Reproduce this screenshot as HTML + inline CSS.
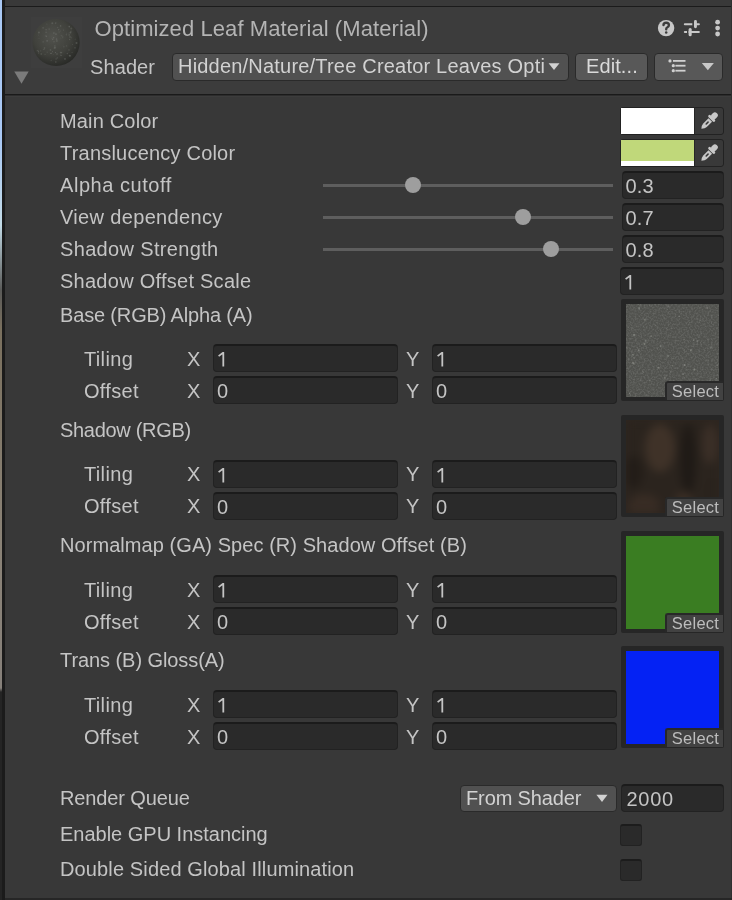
<!DOCTYPE html>
<html><head><meta charset="utf-8">
<style>
*{box-sizing:border-box;margin:0;padding:0}
html,body{width:732px;height:900px;overflow:hidden;background:#383838}
body{position:relative;will-change:transform;font-family:"Liberation Sans",sans-serif;color:#c4c4c4}
.a{position:absolute}
.t{position:absolute;font-size:20px;line-height:20px;letter-spacing:0.1px;white-space:nowrap;color:#c4c4c4}
.fld{position:absolute;background:#2a2a2a;border:1px solid #222;border-top:2px solid #1b1b1b;border-radius:4px}
.fld span{position:absolute;left:5px;top:3px;font-size:20px;line-height:20px;letter-spacing:0.1px;color:#c4c4c4}
.track{position:absolute;height:3px;background:#5e5e5e;left:323px;width:290px}
.thumb{position:absolute;width:16px;height:16px;border-radius:50%;background:#9e9e9e}
.tex{position:absolute;left:621px;width:103px;height:102px;background:#262626;border-radius:2px}
.tex .img{position:absolute;left:5px;top:5px;width:93px;height:93px;overflow:hidden}
.sel{position:absolute;left:44px;top:82px;width:58px;height:19px;background:#424242;border-top:2px solid #282828;border-left:2px solid #282828;border-radius:3px 0 0 0;font-size:16.5px;line-height:17px;color:#bdbdbd;text-align:center;letter-spacing:0.25px;padding-left:1px}
.stone{background:#5a5b57}.bark{background:#2e2620}.green{background:#3a7d22}.blue{background:#0422f4}
.btn{position:absolute;background:#585858;border:1px solid #2a2a2a;border-radius:4px}
.chk{position:absolute;left:620px;width:22px;height:22px;background:#2a2a2a;border:1px solid #222;border-top:2px solid #1c1c1c;border-radius:3px}
</style></head><body>
<!-- left desktop strip -->
<div class="a" style="left:0;top:0;width:2px;height:900px;background:linear-gradient(180deg,#a9c8f4 0,#a9c8f4 140px,#c2dae6 225px,#5a5a58 290px,#7a705e 330px,#8a8276 540px,#86807a 688px,#242424 692px,#242424 900px)"></div>
<div class="a" style="left:2px;top:0;width:3px;height:900px;background:#1b1b1b"></div>
<!-- top -->
<div class="a" style="left:5px;top:0;width:727px;height:6px;background:#393939"></div>
<div class="a" style="left:5px;top:6px;width:727px;height:1px;background:#1b1b1b"></div>
<div class="a" style="left:5px;top:7px;width:727px;height:87px;background:#3c3c3c"></div>
<div class="a" style="left:5px;top:94px;width:727px;height:1px;background:#1a1a1a"></div>
<div class="a" style="left:5px;top:95px;width:727px;height:1px;background:#2c2c2c"></div>
<div class="a" style="left:5px;top:96px;width:727px;height:1px;background:#3c3c3c"></div>
<div class="a" style="left:731px;top:0;width:1px;height:900px;background:#303030"></div>
<div class="a" style="left:5px;top:898px;width:727px;height:2px;background:#262626"></div>

<!-- header -->
<div class="a" style="left:31px;top:17px;width:51px;height:51px;background:#3e3e3e"></div>
<svg class="a" style="left:30px;top:16px" width="52" height="53" viewBox="30 16 52 53">
<defs><radialGradient id="sg" cx="0.42" cy="0.38" r="0.65"><stop offset="0" stop-color="#51524d"/><stop offset="0.6" stop-color="#40413c"/><stop offset="1" stop-color="#282926"/></radialGradient></defs>
<circle cx="56.1" cy="42.5" r="23.6" fill="url(#sg)"/>
<circle cx="57.3" cy="57.9" r="0.8" fill="#b8bcb8" opacity="0.13"/><circle cx="52.3" cy="38.7" r="0.9" fill="#b8bcb8" opacity="0.07"/><circle cx="55.5" cy="52.6" r="0.7" fill="#b8bcb8" opacity="0.23"/><circle cx="63.6" cy="30.1" r="0.6" fill="#b8bcb8" opacity="0.17"/><circle cx="43.1" cy="27.8" r="0.9" fill="#b8bcb8" opacity="0.15"/><circle cx="53.6" cy="37.8" r="0.8" fill="#b8bcb8" opacity="0.19"/><circle cx="54.9" cy="46.0" r="0.7" fill="#b8bcb8" opacity="0.20"/><circle cx="52.3" cy="23.2" r="1.0" fill="#b8bcb8" opacity="0.18"/><circle cx="41.3" cy="54.0" r="1.0" fill="#b8bcb8" opacity="0.14"/><circle cx="60.8" cy="38.0" r="0.6" fill="#b8bcb8" opacity="0.09"/><circle cx="69.6" cy="39.5" r="0.7" fill="#b8bcb8" opacity="0.17"/><circle cx="43.1" cy="41.9" r="0.8" fill="#b8bcb8" opacity="0.12"/><circle cx="38.9" cy="32.4" r="1.0" fill="#b8bcb8" opacity="0.18"/><circle cx="69.1" cy="26.1" r="0.6" fill="#b8bcb8" opacity="0.17"/><circle cx="69.3" cy="26.7" r="0.8" fill="#b8bcb8" opacity="0.21"/><circle cx="53.9" cy="33.1" r="0.8" fill="#b8bcb8" opacity="0.20"/><circle cx="54.9" cy="47.7" r="1.0" fill="#b8bcb8" opacity="0.20"/><circle cx="72.1" cy="52.4" r="0.6" fill="#b8bcb8" opacity="0.13"/><circle cx="51.1" cy="60.2" r="0.5" fill="#b8bcb8" opacity="0.21"/><circle cx="52.8" cy="39.6" r="0.7" fill="#b8bcb8" opacity="0.18"/><circle cx="71.3" cy="28.4" r="1.0" fill="#b8bcb8" opacity="0.15"/><circle cx="54.0" cy="47.9" r="0.5" fill="#b8bcb8" opacity="0.16"/><circle cx="60.5" cy="55.2" r="0.6" fill="#b8bcb8" opacity="0.16"/><circle cx="75.0" cy="47.7" r="1.0" fill="#b8bcb8" opacity="0.12"/><circle cx="66.4" cy="34.7" r="0.8" fill="#b8bcb8" opacity="0.14"/><circle cx="46.1" cy="29.8" r="0.8" fill="#b8bcb8" opacity="0.16"/><circle cx="70.0" cy="37.0" r="0.9" fill="#b8bcb8" opacity="0.14"/><circle cx="57.0" cy="54.0" r="0.8" fill="#b8bcb8" opacity="0.22"/><circle cx="54.0" cy="41.8" r="0.8" fill="#b8bcb8" opacity="0.14"/><circle cx="72.4" cy="44.6" r="0.5" fill="#b8bcb8" opacity="0.17"/><circle cx="46.1" cy="32.2" r="0.7" fill="#b8bcb8" opacity="0.18"/><circle cx="51.3" cy="25.1" r="0.5" fill="#b8bcb8" opacity="0.07"/><circle cx="46.9" cy="24.1" r="0.7" fill="#b8bcb8" opacity="0.11"/><circle cx="46.2" cy="36.0" r="0.7" fill="#b8bcb8" opacity="0.13"/><circle cx="45.1" cy="54.4" r="0.7" fill="#b8bcb8" opacity="0.12"/><circle cx="56.6" cy="39.1" r="0.9" fill="#b8bcb8" opacity="0.16"/><circle cx="52.5" cy="51.7" r="0.6" fill="#b8bcb8" opacity="0.19"/><circle cx="61.4" cy="55.3" r="0.6" fill="#b8bcb8" opacity="0.18"/><circle cx="50.8" cy="53.4" r="0.7" fill="#b8bcb8" opacity="0.20"/><circle cx="61.4" cy="35.7" r="0.8" fill="#b8bcb8" opacity="0.12"/><circle cx="66.7" cy="33.2" r="0.6" fill="#b8bcb8" opacity="0.10"/><circle cx="47.1" cy="40.8" r="0.9" fill="#b8bcb8" opacity="0.19"/><circle cx="60.6" cy="52.6" r="0.8" fill="#b8bcb8" opacity="0.19"/><circle cx="60.4" cy="30.9" r="0.6" fill="#b8bcb8" opacity="0.09"/><circle cx="59.1" cy="32.0" r="0.7" fill="#b8bcb8" opacity="0.12"/><circle cx="44.3" cy="49.0" r="0.6" fill="#b8bcb8" opacity="0.21"/><circle cx="76.5" cy="43.1" r="1.0" fill="#b8bcb8" opacity="0.21"/><circle cx="37.3" cy="50.7" r="0.6" fill="#b8bcb8" opacity="0.21"/><circle cx="55.6" cy="23.3" r="0.8" fill="#b8bcb8" opacity="0.17"/><circle cx="53.1" cy="54.4" r="0.5" fill="#b8bcb8" opacity="0.10"/><circle cx="46.6" cy="36.6" r="0.5" fill="#b8bcb8" opacity="0.19"/><circle cx="70.5" cy="32.5" r="0.9" fill="#b8bcb8" opacity="0.21"/><circle cx="69.0" cy="33.1" r="0.9" fill="#b8bcb8" opacity="0.07"/><circle cx="61.5" cy="52.6" r="0.8" fill="#b8bcb8" opacity="0.17"/><circle cx="38.7" cy="53.0" r="0.7" fill="#b8bcb8" opacity="0.16"/><circle cx="55.8" cy="62.0" r="0.9" fill="#b8bcb8" opacity="0.14"/><circle cx="50.5" cy="50.0" r="0.9" fill="#b8bcb8" opacity="0.15"/><circle cx="65.0" cy="58.9" r="0.9" fill="#b8bcb8" opacity="0.21"/><circle cx="56.9" cy="40.9" r="0.9" fill="#b8bcb8" opacity="0.17"/><circle cx="66.5" cy="45.9" r="0.8" fill="#b8bcb8" opacity="0.11"/><circle cx="43.3" cy="49.2" r="0.5" fill="#b8bcb8" opacity="0.19"/><circle cx="63.1" cy="45.0" r="0.5" fill="#b8bcb8" opacity="0.09"/><circle cx="75.3" cy="39.4" r="0.8" fill="#b8bcb8" opacity="0.08"/><circle cx="51.4" cy="53.3" r="0.8" fill="#b8bcb8" opacity="0.12"/><circle cx="45.3" cy="36.0" r="0.7" fill="#b8bcb8" opacity="0.10"/><circle cx="67.3" cy="53.5" r="0.7" fill="#b8bcb8" opacity="0.18"/><circle cx="63.9" cy="46.8" r="0.8" fill="#b8bcb8" opacity="0.13"/><circle cx="58.7" cy="29.8" r="0.8" fill="#b8bcb8" opacity="0.19"/><circle cx="44.5" cy="47.8" r="0.9" fill="#b8bcb8" opacity="0.14"/><circle cx="40.7" cy="50.9" r="0.6" fill="#b8bcb8" opacity="0.14"/><circle cx="39.0" cy="38.6" r="0.7" fill="#b8bcb8" opacity="0.08"/><circle cx="38.5" cy="51.3" r="0.7" fill="#b8bcb8" opacity="0.22"/><circle cx="71.1" cy="31.3" r="0.7" fill="#b8bcb8" opacity="0.11"/><circle cx="69.6" cy="55.7" r="0.9" fill="#b8bcb8" opacity="0.17"/><circle cx="60.6" cy="25.9" r="0.8" fill="#b8bcb8" opacity="0.18"/><circle cx="68.9" cy="52.2" r="0.6" fill="#b8bcb8" opacity="0.07"/><circle cx="56.8" cy="38.1" r="0.5" fill="#b8bcb8" opacity="0.08"/><circle cx="62.6" cy="36.4" r="0.9" fill="#b8bcb8" opacity="0.07"/><circle cx="70.1" cy="55.8" r="0.9" fill="#b8bcb8" opacity="0.18"/><circle cx="71.4" cy="37.8" r="0.5" fill="#b8bcb8" opacity="0.19"/><circle cx="57.7" cy="27.6" r="0.6" fill="#b8bcb8" opacity="0.18"/><circle cx="56.0" cy="22.2" r="0.7" fill="#b8bcb8" opacity="0.08"/><circle cx="38.5" cy="35.0" r="0.6" fill="#b8bcb8" opacity="0.10"/><circle cx="56.1" cy="59.0" r="0.7" fill="#b8bcb8" opacity="0.18"/><circle cx="47.2" cy="52.3" r="0.7" fill="#b8bcb8" opacity="0.12"/><circle cx="69.0" cy="49.9" r="0.7" fill="#b8bcb8" opacity="0.22"/><circle cx="56.0" cy="34.1" r="0.9" fill="#b8bcb8" opacity="0.18"/><circle cx="49.1" cy="29.1" r="0.8" fill="#b8bcb8" opacity="0.14"/><circle cx="62.6" cy="37.6" r="0.9" fill="#b8bcb8" opacity="0.08"/><circle cx="69.2" cy="34.9" r="0.9" fill="#b8bcb8" opacity="0.14"/>
</svg>
<svg class="a" style="left:14px;top:71px" width="16" height="14"><polygon points="0.3,0.4 14.7,0.4 7.5,12.8" fill="#7b7b7b"/></svg>
<div class="t" style="left:94.5px;top:17.5px;font-size:22px;line-height:22px;letter-spacing:0.08px;color:#b4b4b4">Optimized Leaf Material (Material)</div>
<div class="t" style="left:90px;top:57px">Shader</div>
<div class="btn" style="left:172px;top:53px;width:397px;height:28px;background:#515151"></div>
<div class="t" style="left:178px;top:56px;letter-spacing:0.2px;color:#d2d2d2">Hidden/Nature/Tree Creator Leaves Opti</div>
<svg class="a" style="left:548px;top:62px" width="12" height="9"><polygon points="0.6,1.2 11.5,1.2 6,8" fill="#d2d2d2"/></svg>
<div class="btn" style="left:575px;top:53px;width:73px;height:28px"></div>
<div class="t" style="left:586px;top:56px;color:#dadada">Edit...</div>
<div class="btn" style="left:654px;top:53px;width:69px;height:28px"></div>


<svg class="a" style="left:654px;top:16px" width="72" height="24" viewBox="654 16 72 24">
<circle cx="666.1" cy="28.1" r="8.2" fill="#c8c8c8"/>
<path d="M663.5 25.1 Q663.5 22.7 666.2 22.7 Q668.9 22.7 668.9 25 Q668.9 26.5 667.4 27.3 Q666.2 27.9 666.2 29.2" fill="none" stroke="#3c3c3c" stroke-width="2.4" stroke-linecap="round"/>
<circle cx="666.2" cy="32.5" r="1.25" fill="#3c3c3c"/>
<rect x="683.8" y="23.2" width="16.1" height="2" rx="1" fill="#c8c8c8"/>
<rect x="692.3" y="22.5" width="1.7" height="3.4" fill="#3c3c3c"/>
<rect x="694" y="20" width="2.9" height="8.2" rx="1.4" fill="#c8c8c8"/>
<rect x="683.8" y="30.9" width="16.1" height="2" rx="1" fill="#c8c8c8"/>
<rect x="687" y="30.5" width="1.6" height="3" fill="#3c3c3c"/>
<rect x="688.6" y="28" width="3.1" height="8.2" rx="1.5" fill="#c8c8c8"/>
<circle cx="717.6" cy="22.2" r="2.4" fill="#c8c8c8"/>
<circle cx="717.6" cy="28.1" r="2.4" fill="#c8c8c8"/>
<circle cx="717.6" cy="34" r="2.4" fill="#c8c8c8"/>
</svg>
<svg class="a" style="left:654px;top:53px" width="70" height="28" viewBox="654 53 70 28">
<circle cx="670" cy="60.9" r="1.6" fill="#d0d0d0"/>
<rect x="673" y="60" width="12.5" height="1.8" fill="#d0d0d0"/>
<circle cx="673.3" cy="65.7" r="1.6" fill="#d0d0d0"/>
<rect x="675.4" y="64.8" width="10.1" height="1.8" fill="#d0d0d0"/>
<circle cx="673.3" cy="70.7" r="1.6" fill="#d0d0d0"/>
<rect x="675.4" y="69.8" width="10.1" height="1.8" fill="#d0d0d0"/>
<polygon points="701.8,63 713.9,63 707.85,70.3" fill="#c8c8c8"/>
</svg>

<!-- content rows -->
<div class="t" style="left:60px;top:111px;letter-spacing:0.17px">Main Color</div>
<div class="t" style="left:60px;top:143px;letter-spacing:0.21px">Translucency Color</div>
<div class="t" style="left:60px;top:175px;letter-spacing:0.55px">Alpha cutoff</div>
<div class="t" style="left:60px;top:207px;letter-spacing:0.34px">View dependency</div>
<div class="t" style="left:60px;top:239px;letter-spacing:0.34px">Shadow Strength</div>
<div class="t" style="left:60px;top:271px;letter-spacing:0.26px">Shadow Offset Scale</div>

<div class="a" style="left:620px;top:107px;width:104px;height:28px;background:#393939;border:1px solid #222;border-radius:3px"></div>
<div class="a" style="left:621px;top:108px;width:73px;height:26px;background:#fff"></div>
<div class="a" style="left:694px;top:108px;width:1px;height:26px;background:#262626"></div>
<div class="a" style="left:620px;top:139px;width:104px;height:28px;background:#393939;border:1px solid #222;border-radius:3px"></div>
<div class="a" style="left:621px;top:140px;width:73px;height:21px;background:#c0d87a"></div>
<div class="a" style="left:621px;top:161px;width:73px;height:5px;background:#fff"></div>
<div class="a" style="left:694px;top:140px;width:1px;height:26px;background:#262626"></div>
<svg class="a" style="left:694px;top:104px" width="30" height="66" viewBox="694 104 30 66">
<g transform="translate(709.6 120.6) rotate(45)" fill="#c8c8c8">
<path d="M-2.5,-1 L2.5,-1 L2.5,6.5 Q2.5,8.8 0,11.6 Q-2.5,8.8 -2.5,6.5 Z"/>
<rect x="-0.8" y="1.4" width="1.6" height="4.2" rx="0.8" fill="#393939"/>
<rect x="-4.4" y="-4.4" width="8.8" height="2.8" rx="1.4"/>
<rect x="-2.9" y="-10.4" width="5.8" height="7" rx="2.9"/>
</g>
<g transform="translate(709.6 152.6) rotate(45)" fill="#c8c8c8">
<path d="M-2.5,-1 L2.5,-1 L2.5,6.5 Q2.5,8.8 0,11.6 Q-2.5,8.8 -2.5,6.5 Z"/>
<rect x="-0.8" y="1.4" width="1.6" height="4.2" rx="0.8" fill="#393939"/>
<rect x="-4.4" y="-4.4" width="8.8" height="2.8" rx="1.4"/>
<rect x="-2.9" y="-10.4" width="5.8" height="7" rx="2.9"/>
</g>
</svg>

<div class="track" style="top:184px"></div><div class="thumb" style="left:405px;top:177px"></div>
<div class="track" style="top:216px"></div><div class="thumb" style="left:515px;top:209px"></div>
<div class="track" style="top:248px"></div><div class="thumb" style="left:543px;top:241px"></div>
<div class="fld" style="left:622px;top:171px;width:102px;height:28px"><span style="left:2.5px">0.3</span></div>
<div class="fld" style="left:622px;top:203px;width:102px;height:28px"><span style="left:2.5px">0.7</span></div>
<div class="fld" style="left:622px;top:235px;width:102px;height:28px"><span style="left:2.5px">0.8</span></div>
<div class="fld" style="left:620px;top:267px;width:104px;height:28px"><svg class="one" style="position:absolute;left:3.6px;top:6.2px" width="8" height="15" viewBox="0 0 8 15"><path d="M5.3,14.6 L5.3,0.6 L0.6,4.1" fill="none" stroke="#c4c4c4" stroke-width="1.8" stroke-linejoin="round"/></svg></div>

<div class="t" style="left:60px;top:305px;letter-spacing:-0.16px">Base (RGB) Alpha (A)</div>
<div class="t" style="left:84px;top:349px;letter-spacing:0.35px">Tiling</div>
<div class="t" style="left:187px;top:349px">X</div>
<div class="fld" style="left:213px;top:344px;width:185px;height:28px"><svg class="one" style="position:absolute;left:4px;top:6.2px" width="8" height="15" viewBox="0 0 8 15"><path d="M5.3,14.6 L5.3,0.6 L0.6,4.1" fill="none" stroke="#c4c4c4" stroke-width="1.8" stroke-linejoin="round"/></svg></div>
<div class="t" style="left:406px;top:349px">Y</div>
<div class="fld" style="left:432px;top:344px;width:185px;height:28px"><svg class="one" style="position:absolute;left:4px;top:6.2px" width="8" height="15" viewBox="0 0 8 15"><path d="M5.3,14.6 L5.3,0.6 L0.6,4.1" fill="none" stroke="#c4c4c4" stroke-width="1.8" stroke-linejoin="round"/></svg></div>
<div class="t" style="left:84px;top:381px;letter-spacing:0.3px">Offset</div>
<div class="t" style="left:187px;top:381px">X</div>
<div class="fld" style="left:213px;top:376px;width:185px;height:28px"><span style="left:3px;top:3px">0</span></div>
<div class="t" style="left:406px;top:381px">Y</div>
<div class="fld" style="left:432px;top:376px;width:185px;height:28px"><span style="left:3px;top:3px">0</span></div>
<div class="tex" style="top:299px"><div class="img stone"><svg width="93" height="93"><filter id="nz" x="0" y="0" width="100%" height="100%"><feTurbulence type="fractalNoise" baseFrequency="0.55" numOctaves="2" seed="7"/><feColorMatrix type="matrix" values="0 0 0 0 0.62  0 0 0 0 0.63  0 0 0 0 0.62  1.5 0 0 0 -0.6"/></filter><rect width="93" height="93" fill="#51524e"/><rect width="93" height="93" filter="url(#nz)" opacity="0.28"/><circle cx="42.1" cy="52.1" r="1.1" fill="#a4a6a0" opacity="0.36"/><circle cx="47.2" cy="54.6" r="0.6" fill="#a4a6a0" opacity="0.38"/><circle cx="58.6" cy="73.7" r="0.6" fill="#a4a6a0" opacity="0.31"/><circle cx="8.4" cy="75.3" r="0.9" fill="#a4a6a0" opacity="0.21"/><circle cx="91.3" cy="89.7" r="0.9" fill="#a4a6a0" opacity="0.42"/><circle cx="14.6" cy="1.4" r="0.8" fill="#a4a6a0" opacity="0.22"/><circle cx="17.7" cy="22.5" r="0.5" fill="#a4a6a0" opacity="0.36"/><circle cx="41.0" cy="78.3" r="0.8" fill="#a4a6a0" opacity="0.42"/><circle cx="46.5" cy="61.6" r="0.8" fill="#a4a6a0" opacity="0.30"/><circle cx="92.8" cy="92.6" r="1.0" fill="#a4a6a0" opacity="0.45"/><circle cx="29.3" cy="21.4" r="0.7" fill="#a4a6a0" opacity="0.22"/><circle cx="71.3" cy="37.2" r="1.0" fill="#a4a6a0" opacity="0.34"/><circle cx="89.1" cy="78.8" r="0.5" fill="#a4a6a0" opacity="0.27"/><circle cx="84.7" cy="43.7" r="1.1" fill="#a4a6a0" opacity="0.34"/><circle cx="6.8" cy="58.5" r="1.0" fill="#a4a6a0" opacity="0.29"/><circle cx="8.1" cy="30.9" r="1.1" fill="#a4a6a0" opacity="0.47"/><circle cx="11.0" cy="22.9" r="0.6" fill="#a4a6a0" opacity="0.22"/><circle cx="74.1" cy="16.5" r="0.8" fill="#a4a6a0" opacity="0.36"/><circle cx="17.7" cy="68.1" r="0.6" fill="#a4a6a0" opacity="0.43"/><circle cx="10.8" cy="39.1" r="0.6" fill="#a4a6a0" opacity="0.29"/><circle cx="90.3" cy="74.7" r="0.7" fill="#a4a6a0" opacity="0.51"/><circle cx="19.6" cy="36.7" r="1.0" fill="#a4a6a0" opacity="0.42"/><circle cx="9.3" cy="92.0" r="0.6" fill="#a4a6a0" opacity="0.29"/><circle cx="71.9" cy="30.6" r="0.7" fill="#a4a6a0" opacity="0.23"/><circle cx="8.4" cy="54.2" r="0.6" fill="#a4a6a0" opacity="0.41"/><circle cx="34.6" cy="42.1" r="1.1" fill="#a4a6a0" opacity="0.37"/><circle cx="53.4" cy="80.6" r="0.6" fill="#a4a6a0" opacity="0.25"/><circle cx="84.5" cy="76.1" r="0.6" fill="#a4a6a0" opacity="0.27"/><circle cx="68.8" cy="87.5" r="0.6" fill="#a4a6a0" opacity="0.53"/><circle cx="82.0" cy="56.1" r="0.8" fill="#a4a6a0" opacity="0.24"/><circle cx="3.6" cy="89.5" r="0.6" fill="#a4a6a0" opacity="0.45"/><circle cx="23.9" cy="76.6" r="0.9" fill="#a4a6a0" opacity="0.30"/><circle cx="16.3" cy="67.0" r="0.5" fill="#a4a6a0" opacity="0.28"/><circle cx="52.0" cy="79.3" r="0.9" fill="#a4a6a0" opacity="0.30"/><circle cx="85.3" cy="19.0" r="0.5" fill="#a4a6a0" opacity="0.29"/><circle cx="41.5" cy="5.6" r="0.6" fill="#a4a6a0" opacity="0.33"/><circle cx="53.2" cy="12.2" r="0.7" fill="#a4a6a0" opacity="0.51"/><circle cx="91.2" cy="61.1" r="0.9" fill="#a4a6a0" opacity="0.40"/><circle cx="13.1" cy="3.3" r="0.5" fill="#a4a6a0" opacity="0.52"/><circle cx="65.2" cy="89.5" r="0.5" fill="#a4a6a0" opacity="0.42"/><circle cx="44.8" cy="67.9" r="0.7" fill="#a4a6a0" opacity="0.55"/><circle cx="7.0" cy="50.8" r="0.9" fill="#a4a6a0" opacity="0.52"/><circle cx="68.5" cy="65.4" r="1.0" fill="#a4a6a0" opacity="0.52"/><circle cx="32.7" cy="63.7" r="1.0" fill="#a4a6a0" opacity="0.50"/><circle cx="38.8" cy="73.5" r="1.0" fill="#a4a6a0" opacity="0.40"/><circle cx="58.1" cy="35.6" r="0.8" fill="#a4a6a0" opacity="0.41"/><circle cx="7.5" cy="59.5" r="1.1" fill="#a4a6a0" opacity="0.51"/><circle cx="67.7" cy="36.1" r="0.9" fill="#a4a6a0" opacity="0.40"/><circle cx="41.0" cy="78.0" r="0.6" fill="#a4a6a0" opacity="0.46"/><circle cx="2.8" cy="55.9" r="0.8" fill="#a4a6a0" opacity="0.28"/><circle cx="64.9" cy="46.2" r="0.9" fill="#a4a6a0" opacity="0.52"/><circle cx="23.8" cy="1.1" r="0.7" fill="#a4a6a0" opacity="0.44"/><circle cx="18.8" cy="15.8" r="1.0" fill="#a4a6a0" opacity="0.43"/><circle cx="41.1" cy="82.9" r="0.7" fill="#a4a6a0" opacity="0.43"/><circle cx="18.5" cy="40.1" r="1.0" fill="#a4a6a0" opacity="0.52"/><circle cx="81.9" cy="35.8" r="0.8" fill="#a4a6a0" opacity="0.31"/><circle cx="12.7" cy="46.2" r="1.0" fill="#a4a6a0" opacity="0.50"/><circle cx="66.1" cy="88.4" r="0.7" fill="#a4a6a0" opacity="0.26"/><circle cx="41.9" cy="25.6" r="0.6" fill="#a4a6a0" opacity="0.34"/><circle cx="58.2" cy="45.9" r="0.7" fill="#a4a6a0" opacity="0.49"/><circle cx="91.3" cy="42.1" r="0.5" fill="#a4a6a0" opacity="0.21"/><circle cx="81.2" cy="3.9" r="0.9" fill="#a4a6a0" opacity="0.40"/><circle cx="28.7" cy="73.6" r="0.5" fill="#a4a6a0" opacity="0.25"/><circle cx="42.3" cy="2.3" r="1.0" fill="#a4a6a0" opacity="0.28"/><circle cx="13.1" cy="4.4" r="0.9" fill="#a4a6a0" opacity="0.36"/><circle cx="58.6" cy="60.9" r="1.0" fill="#a4a6a0" opacity="0.54"/><circle cx="63.7" cy="18.5" r="0.8" fill="#a4a6a0" opacity="0.26"/><circle cx="1.0" cy="43.9" r="0.9" fill="#a4a6a0" opacity="0.26"/><circle cx="25.3" cy="32.2" r="0.9" fill="#a4a6a0" opacity="0.38"/><circle cx="57.1" cy="70.3" r="0.7" fill="#a4a6a0" opacity="0.48"/></svg></div><div class="sel">Select</div></div>
<div class="t" style="left:60px;top:420px;letter-spacing:-0.3px">Shadow (RGB)</div>
<div class="t" style="left:84px;top:464px;letter-spacing:0.35px">Tiling</div>
<div class="t" style="left:187px;top:464px">X</div>
<div class="fld" style="left:213px;top:460px;width:185px;height:28px"><svg class="one" style="position:absolute;left:4px;top:6.2px" width="8" height="15" viewBox="0 0 8 15"><path d="M5.3,14.6 L5.3,0.6 L0.6,4.1" fill="none" stroke="#c4c4c4" stroke-width="1.8" stroke-linejoin="round"/></svg></div>
<div class="t" style="left:406px;top:464px">Y</div>
<div class="fld" style="left:432px;top:460px;width:185px;height:28px"><svg class="one" style="position:absolute;left:4px;top:6.2px" width="8" height="15" viewBox="0 0 8 15"><path d="M5.3,14.6 L5.3,0.6 L0.6,4.1" fill="none" stroke="#c4c4c4" stroke-width="1.8" stroke-linejoin="round"/></svg></div>
<div class="t" style="left:84px;top:496px;letter-spacing:0.3px">Offset</div>
<div class="t" style="left:187px;top:496px">X</div>
<div class="fld" style="left:213px;top:492px;width:185px;height:28px"><span style="left:3px;top:3px">0</span></div>
<div class="t" style="left:406px;top:496px">Y</div>
<div class="fld" style="left:432px;top:492px;width:185px;height:28px"><span style="left:3px;top:3px">0</span></div>
<div class="tex" style="top:415px"><div class="img bark"><svg width="93" height="93" viewBox="0 0 93 93" style="filter:blur(4.5px)"><g>
<rect x="-10" y="-10" width="113" height="113" fill="#2b241e"/>
<ellipse cx="34" cy="28" rx="15" ry="24" fill="#3f3228"/>
<ellipse cx="84" cy="24" rx="8" ry="20" fill="#3b2f27"/>
<ellipse cx="62" cy="40" rx="8" ry="36" fill="#1f1a16"/>
<ellipse cx="8" cy="52" rx="9" ry="16" fill="#231d18"/>
<ellipse cx="58" cy="82" rx="9" ry="11" fill="#3a2e25"/>
<ellipse cx="18" cy="86" rx="16" ry="12" fill="#382c24"/>
<ellipse cx="86" cy="72" rx="8" ry="14" fill="#2a231d"/>
</g></svg></div><div class="sel">Select</div></div>
<div class="t" style="left:60px;top:535px;letter-spacing:0.065px">Normalmap (GA) Spec (R) Shadow Offset (B)</div>
<div class="t" style="left:84px;top:580px;letter-spacing:0.35px">Tiling</div>
<div class="t" style="left:187px;top:580px">X</div>
<div class="fld" style="left:213px;top:575px;width:185px;height:28px"><svg class="one" style="position:absolute;left:4px;top:6.2px" width="8" height="15" viewBox="0 0 8 15"><path d="M5.3,14.6 L5.3,0.6 L0.6,4.1" fill="none" stroke="#c4c4c4" stroke-width="1.8" stroke-linejoin="round"/></svg></div>
<div class="t" style="left:406px;top:580px">Y</div>
<div class="fld" style="left:432px;top:575px;width:185px;height:28px"><svg class="one" style="position:absolute;left:4px;top:6.2px" width="8" height="15" viewBox="0 0 8 15"><path d="M5.3,14.6 L5.3,0.6 L0.6,4.1" fill="none" stroke="#c4c4c4" stroke-width="1.8" stroke-linejoin="round"/></svg></div>
<div class="t" style="left:84px;top:612px;letter-spacing:0.3px">Offset</div>
<div class="t" style="left:187px;top:612px">X</div>
<div class="fld" style="left:213px;top:607px;width:185px;height:28px"><span style="left:3px;top:3px">0</span></div>
<div class="t" style="left:406px;top:612px">Y</div>
<div class="fld" style="left:432px;top:607px;width:185px;height:28px"><span style="left:3px;top:3px">0</span></div>
<div class="tex" style="top:531px"><div class="img green"></div><div class="sel">Select</div></div>
<div class="t" style="left:60px;top:650px;letter-spacing:-0.07px">Trans (B) Gloss(A)</div>
<div class="t" style="left:84px;top:695px;letter-spacing:0.35px">Tiling</div>
<div class="t" style="left:187px;top:695px">X</div>
<div class="fld" style="left:213px;top:690px;width:185px;height:28px"><svg class="one" style="position:absolute;left:4px;top:6.2px" width="8" height="15" viewBox="0 0 8 15"><path d="M5.3,14.6 L5.3,0.6 L0.6,4.1" fill="none" stroke="#c4c4c4" stroke-width="1.8" stroke-linejoin="round"/></svg></div>
<div class="t" style="left:406px;top:695px">Y</div>
<div class="fld" style="left:432px;top:690px;width:185px;height:28px"><svg class="one" style="position:absolute;left:4px;top:6.2px" width="8" height="15" viewBox="0 0 8 15"><path d="M5.3,14.6 L5.3,0.6 L0.6,4.1" fill="none" stroke="#c4c4c4" stroke-width="1.8" stroke-linejoin="round"/></svg></div>
<div class="t" style="left:84px;top:727px;letter-spacing:0.3px">Offset</div>
<div class="t" style="left:187px;top:727px">X</div>
<div class="fld" style="left:213px;top:722px;width:185px;height:28px"><span style="left:3px;top:3px">0</span></div>
<div class="t" style="left:406px;top:727px">Y</div>
<div class="fld" style="left:432px;top:722px;width:185px;height:28px"><span style="left:3px;top:3px">0</span></div>
<div class="tex" style="top:646px"><div class="img blue"></div><div class="sel">Select</div></div>
<div class="t" style="left:60px;top:788px;letter-spacing:-0.13px">Render Queue</div>
<div class="btn" style="left:460px;top:785px;width:157px;height:27px;background:#515151"></div>
<div class="t" style="left:466px;top:788px;color:#d2d2d2;letter-spacing:-0.12px">From Shader</div>
<svg class="a" style="left:596px;top:794px" width="12" height="9"><polygon points="0.4,0.8 11.5,0.8 6,7.9" fill="#d2d2d2"/></svg>
<div class="fld" style="left:621px;top:784px;width:103px;height:28px"><span style="left:4.5px;letter-spacing:0.7px">2000</span></div>
<div class="t" style="left:60px;top:824px;letter-spacing:-0.01px">Enable GPU Instancing</div>
<div class="chk" style="top:824px"></div>
<div class="t" style="left:60px;top:859px;letter-spacing:0.13px">Double Sided Global Illumination</div>
<div class="chk" style="top:859px"></div>

</body></html>
